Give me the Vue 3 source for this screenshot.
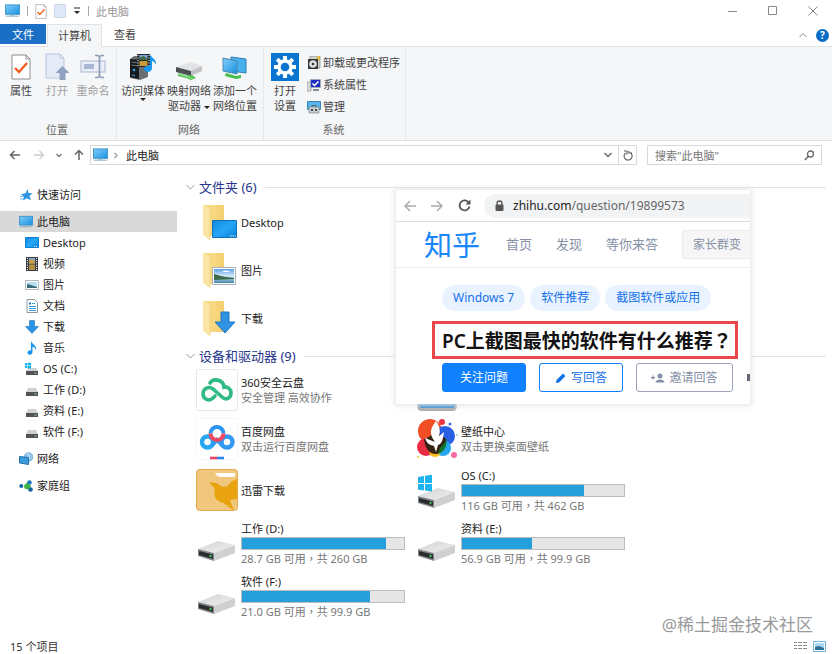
<script setup>
import { ref } from 'vue';

const search = ref('');
const selected = ref('pc');

const placeActions = [
    { icon: 'props',  label: '属性' },
    { icon: 'open',   label: '打开', disabled: true },
    { icon: 'rename', label: '重命名', disabled: true },
];

const systemActions = [
    { icon: 'uninstall', label: '卸载或更改程序' },
    { icon: 'sysprops',  label: '系统属性' },
    { icon: 'manage',    label: '管理' },
];

const children = [
    { id: 'desktop',   icon: 'desktop',   label: 'Desktop' },
    { id: 'video',     icon: 'video',     label: '视频' },
    { id: 'pictures',  icon: 'picture',   label: '图片' },
    { id: 'documents', icon: 'document',  label: '文档' },
    { id: 'downloads', icon: 'download',  label: '下载' },
    { id: 'music',     icon: 'music',     label: '音乐' },
    { id: 'c',         icon: 'disk-os',   label: 'OS (C:)' },
    { id: 'd',         icon: 'disk',      label: '工作 (D:)' },
    { id: 'e',         icon: 'disk',      label: '资料 (E:)' },
    { id: 'f',         icon: 'disk',      label: '软件 (F:)' },
];

const folders = [
    { icon: 'folder-desktop',  label: 'Desktop' },
    { icon: 'folder-picture',  label: '图片' },
    { icon: 'folder-download', label: '下载' },
];

// used — заполненная часть полосы, %
const devices = [
    { icon: 'cloud360',  label: '360安全云盘', note: '安全管理 高效协作' },
    { icon: 'device',    label: '' },
    { icon: 'baidu',     label: '百度网盘', note: '双击运行百度网盘' },
    { icon: 'wallpaper', label: '壁纸中心', note: '双击更换桌面壁纸' },
    { icon: 'xunlei',    label: '迅雷下载' },
    { icon: 'drive-os',  label: 'OS (C:)',   used: 75, note: '116 GB 可用，共 462 GB' },
    { icon: 'drive',     label: '工作 (D:)', used: 89, note: '28.7 GB 可用，共 260 GB' },
    { icon: 'drive',     label: '资料 (E:)', used: 43, note: '56.9 GB 可用，共 99.9 GB' },
    { icon: 'drive',     label: '软件 (F:)', used: 79, note: '21.0 GB 可用，共 99.9 GB' },
];

const tags = ['Windows 7', '软件推荐', '截图软件或应用'];
</script>

<template>
    <div class="explorer">
        <!-- icon sheet -->
        <svg class="sheet" width="0" height="0" aria-hidden="true">
            <defs>
                <linearGradient id="g-screen" x1="0" y1="0" x2="1" y2="1">
                    <stop offset="0" stop-color="#7fd0f8" /><stop offset="1" stop-color="#1a8fe0" />
                </linearGradient>
                <linearGradient id="g-desk" x1="0" y1="0" x2="1" y2="1">
                    <stop offset="0" stop-color="#1488dd" /><stop offset=".5" stop-color="#24a6f5" /><stop offset="1" stop-color="#0c84dc" />
                </linearGradient>
                <linearGradient id="g-folder" x1="0" y1="0" x2="1" y2="0">
                    <stop offset="0" stop-color="#fbdf93" /><stop offset="1" stop-color="#f3cf6d" />
                </linearGradient>
                <linearGradient id="g-disk" x1="0" y1="0" x2="1" y2="1">
                    <stop offset="0" stop-color="#d2d3d4" /><stop offset="1" stop-color="#f0f0f0" />
                </linearGradient>
                <linearGradient id="g-sky" x1="0" y1="0" x2="0" y2="1">
                    <stop offset="0" stop-color="#5b9fe6" /><stop offset=".5" stop-color="#d6ecfa" /><stop offset="1" stop-color="#3f86ad" />
                </linearGradient>
            </defs>
            <symbol id="i-pc" viewBox="0 0 16 14">
                <rect x=".5" y=".5" width="15" height="10" fill="url(#g-screen)" stroke="#3b93c8" />
                <path d="M6 11h4v1H6z" fill="#8fb3c6" /><path d="M1 12.5h14" stroke="#86a9bd" />
            </symbol>
            <symbol id="i-props" viewBox="0 0 20 26">
                <path d="M1 1h14l4 4v20H1z" fill="#fff" stroke="#8d8d8d" /><path d="M15 1v4h4" fill="none" stroke="#8d8d8d" />
                <path d="M4 14l4 4 8-9" fill="none" stroke="#f0601d" stroke-width="2.4" />
            </symbol>
            <symbol id="i-page" viewBox="0 0 12 14">
                <path d="M.5 .5h11v13H.5z" fill="#dfe8f6" stroke="#cdd9eb" />
            </symbol>
            <symbol id="i-open" viewBox="0 0 26 28">
                <path d="M2 1h14l4 4v20H2z" fill="#e4ebf7" stroke="#b9c6de" /><path d="M16 1v4h4" fill="none" stroke="#b9c6de" />
                <path d="M18.500 13l7 7h-4v7h-6v-7h-4z" fill="#8fa2c0" />
            </symbol>
            <symbol id="i-rename" viewBox="0 0 26 28">
                <rect x="1" y="8" width="24" height="11" fill="#e9eef8" stroke="#a9b8d3" />
                <path d="M4 11h10v5H4z" fill="#a7b6d3" />
                <path d="M15 2.500h3l1.500 1.500 1.500-1.500h3M19.500 4v19M15 24.500h3l1.500-1.500 1.500 1.500h3" fill="none" stroke="#8f9db6" stroke-width="1.700" />
            </symbol>
            <symbol id="i-media" viewBox="0 0 28 28">
                <path d="M1 6l4-3 14 1v20l-8 3-10-2z" fill="#6b6e72" /><path d="M1 6l9 1v19l-9-2z" fill="#17191c" />
                <path d="M2.500 9l6 .8M2.500 12l6 .8" stroke="#6f7880" /><circle cx="5" cy="17" r="1.300" fill="#2aa8f2" /><path d="M3 22l3 .5" stroke="#36aef5" />
                <path d="M8 1h13v13H8z" fill="#25272b" /><path d="M10.500 2h8v5h-8z" fill="#7da4df" /><path d="M10.500 8h8v5h-8z" fill="#c79b3a" />
                <path d="M10.500 5l4-2 4 3v1h-8z" fill="#426b3b" /><path d="M9 2v11M20 2v11" stroke="#fff" stroke-dasharray="1 1.500" />
                <path d="M21 1c1 4 7 5 6 11-1-3-3-4-4-4v7c0 5-8 5-8 1 0-3 3-4 6-3z" fill="#1698ee" />
            </symbol>
            <symbol id="i-netdrive" viewBox="0 0 28 28">
                <path d="M1 14l14-5 12 4-11 5z" fill="#e2e3e4" />
                <path d="M16 18l11-5v5l-11 5z" fill="#c2c3c5" />
                <path d="M1 14l15 4v5L1 19z" fill="#4b4e51" />
                <path d="M3 20l8 2v3l-8-2zM12 22h5l4 3-5 2-5-2z" fill="#4fbf54" /><path d="M3 21l8 2 7 3" stroke="#9be79d" fill="none" />
            </symbol>
            <symbol id="i-addnet" viewBox="0 0 28 28">
                <path d="M10 4l15 2v14l-15-2z" fill="#46b1ee" stroke="#2c7fb5" /><path d="M2 5l14 3v13L2 18z" fill="url(#g-screen)" stroke="#4b8aaf" />
                <path d="M5 20l10 3 5-1v3l-5 1-11-3z" fill="#48bd4c" />
            </symbol>
            <symbol id="i-gear" viewBox="0 0 28 28">
                <path d="M0 0h28v28H0z" fill="#0a74d1" />
                <circle cx="14" cy="14" r="6" fill="none" stroke="#fff" stroke-width="3.400" />
                <path d="M14 3v4M14 21v4M3 14h4M21 14h4M6.200 6.200l3 3M18.800 18.800l3 3M21.800 6.200l-3 3M9.200 18.800l-3 3" stroke="#fff" stroke-width="4" />
            </symbol>
            <symbol id="i-uninstall" viewBox="0 0 14 14">
                <path d="M3 0h10v12H3z" fill="#cfd0c8" stroke="#777" stroke-width=".6" /><path d="M9 1l4-1v5z" fill="#e4b83a" />
                <path d="M1 3h10v10H1z" fill="#35383a" /><circle cx="6" cy="8" r="3.800" fill="#dedede" /><circle cx="6" cy="8" r="1.300" fill="#35383a" />
            </symbol>
            <symbol id="i-sysprops" viewBox="0 0 14 14">
                <path d="M0 4h4v9H0z" fill="#d7d9dc" stroke="#888" stroke-width=".6" /><path d="M3.500 1.500h10v8h-10z" fill="#1d2fbd" stroke="#a5aaba" />
                <path d="M5.500 5.500l2 2 4-4" stroke="#fff" stroke-width="1.500" fill="none" /><path d="M6 12h6" stroke="#8a8d92" stroke-width="2" />
            </symbol>
            <symbol id="i-manage" viewBox="0 0 14 14">
                <path d="M.5 1.500h13v8H.5z" fill="#56b5ec" stroke="#3b83b3" /><path d="M2 7h10v6H2z" fill="#c9ced2" stroke="#7f868c" stroke-width=".7" />
                <path d="M4 9h2v2H4zM8 9h2v2H8z" fill="#41484f" /><path d="M5 7V5.500h4V7" fill="none" stroke="#59636b" />
            </symbol>
            <symbol id="i-star" viewBox="0 0 14 14">
                <path d="M8.500 1l1 4 4 .2-3 2.800 1.500 4.500-4-2.200-4 2.200.8-4L2 6.200l4.500-1z" fill="#2d94e0" /><path d="M1 11h3M1 8.500h3" stroke="#77bdf0" />
            </symbol>
            <symbol id="i-desktop" viewBox="0 0 14 12">
                <path d="M.5 .5h13v10H.5z" fill="url(#g-desk)" stroke="#0d7fd0" /><path d="M9 9.500h4" stroke="#cfeaff" stroke-dasharray="1 1" />
            </symbol>
            <symbol id="i-video" viewBox="0 0 14 14">
                <path d="M1 0h12v14H1z" fill="#3a3d44" /><path d="M4 1h6v5.500H4z" fill="#8ba7d3" /><path d="M4 7.500h6V13H4z" fill="#b58f45" />
                <path d="M4 4l3-2 3 3v1.500H4z" fill="#c9a13e" /><path d="M2.500 1v12M11.500 1v12" stroke="#fff" stroke-dasharray="1 1.200" />
            </symbol>
            <symbol id="i-picture" viewBox="0 0 14 12">
                <path d="M.5 1.500h13v9H.5z" fill="#fff" stroke="#b1b6ba" /><path d="M2 3h10v6H2z" fill="#b9def3" /><path d="M2 5l4 1 6 2v1H2z" fill="#376a7b" />
            </symbol>
            <symbol id="i-document" viewBox="0 0 14 14">
                <path d="M2 .5h7.500l3 3v10H2z" fill="#fff" stroke="#8e9aa3" /><path d="M4 4.500h2" stroke="#1c70b8" stroke-width="2" />
                <path d="M7 4.500h3M4 7.500h7M4 9.500h7M4 11.500h7" stroke="#349bd8" />
            </symbol>
            <symbol id="i-download" viewBox="0 0 14 14">
                <path d="M4.500 .5h5v6h4L7 13.500.5 6.500h4z" fill="#2c90e3" stroke="#1c77c6" stroke-width=".6" />
            </symbol>
            <symbol id="i-music" viewBox="0 0 14 14">
                <path d="M6 0c1 3.500 6 4 5 9.500C10.500 7 9 6 7.500 5.500v5.500c0 3.500-5 3.500-5 .8C2.500 10 4.500 9 6 9.500z" fill="#1692ee" />
            </symbol>
            <symbol id="i-disk" viewBox="0 0 14 14">
                <path d="M3 5h8l2 4H1z" fill="#d0d1d2" /><path d="M1 9h12v4H1z" fill="#505254" /><path d="M9.500 11h2" stroke="#9de0a5" />
            </symbol>
            <symbol id="i-disk-os" viewBox="0 0 14 14">
                <path d="M3 6h8l2 3H1z" fill="#d0d1d2" /><path d="M1 9h12v4H1z" fill="#505254" /><path d="M9.500 11h2" stroke="#9de0a5" />
                <path d="M0 1h2.500v2.500H0zM3 .7h3v2.800H3zM0 4h2.500v2H0zM3 4h3v2.500H3z" fill="#12b5ea" />
            </symbol>
            <symbol id="i-network" viewBox="0 0 14 14">
                <circle cx="9.500" cy="5" r="4.300" fill="#8cc6ea" stroke="#4c96c4" stroke-width=".6" /><path d="M8 1.500c3 1 3 5 1 7" stroke="#d8f1ff" fill="none" />
                <path d="M.5 4.500l9 1v7l-9-1.500z" fill="#3c9cdc" stroke="#2675aa" />
            </symbol>
            <symbol id="i-homegroup" viewBox="0 0 14 14">
                <path d="M8 3l4 4-2 4-5-3z" fill="#4cba4c" /><circle cx="2.300" cy="7" r="2" fill="#1764a8" /><circle cx="10.500" cy="3.500" r="2.300" fill="#1e77b7" />
                <circle cx="11.500" cy="10.500" r="2.300" fill="#16619b" /><circle cx="8" cy="7.500" r="2.800" fill="#3fb244" />
            </symbol>

            <symbol id="i-folder" viewBox="0 0 42 42">
                <path d="M7 4h21v31H13z" fill="url(#g-folder)" /><path d="M7 4l7 4v31l-7-5z" fill="#fce5a4" /><path d="M14 8v31" stroke="#efcf7b" stroke-width=".7" />
            </symbol>
            <symbol id="i-folder-desktop" viewBox="0 0 42 42">
                <use href="#i-folder" width="42" height="42" />
                <path d="M16.500 19.500h24v17h-24z" fill="url(#g-desk)" stroke="#0f6fb8" /><path d="M34 35h6" stroke="#d6f0ff" stroke-dasharray="1.500 1" />
            </symbol>
            <symbol id="i-folder-picture" viewBox="0 0 42 42">
                <use href="#i-folder" width="42" height="42" />
                <path d="M16.500 18.500h23v17h-23z" fill="#fff" stroke="#a9b1b6" /><path d="M18 20h20v14H18z" fill="url(#g-sky)" />
                <path d="M18 25l7 2 5 1 8 1v1l-20 1z" fill="#3d6b45" /><path d="M26 23c2-2 6-2 8 0z" fill="#fff" />
            </symbol>
            <symbol id="i-folder-download" viewBox="0 0 42 42">
                <use href="#i-folder" width="42" height="42" />
                <path d="M25 15h8v10h6L29 36 19 25h6z" fill="#2f92e2" stroke="#2278c2" />
            </symbol>
            <symbol id="i-cloud360" viewBox="0 0 42 42">
                <rect x=".5" y=".5" width="41" height="41" rx="2" fill="#fff" stroke="#e7e7e7" />
                <path d="M17 29c-4 4-10 1-10-4 0-6 6-8 10-5l9 8c4 4 9 1 9-4 0-4-3-6-7-6M14 14c3-5 13-4 14 4 3-1 7 2 7 6M17 29l2-2" fill="none" stroke="#2fba86" stroke-width="3.600" stroke-linecap="round" />
            </symbol>
            <symbol id="i-baidu" viewBox="0 0 42 42">
                <rect x=".5" y=".5" width="41" height="41" rx="2" fill="#fff" stroke="#f6f6f6" />
                <circle cx="11.500" cy="24" r="5.500" fill="none" stroke="#28a7f2" stroke-width="4.500" /><circle cx="31" cy="24" r="5.500" fill="none" stroke="#3298f4" stroke-width="4.500" />
                <path d="M15.500 28l5.500-6 6 6" fill="none" stroke="#2f9bf3" stroke-width="4" />
                <path d="M14.500 15.500a6.500 6.500 0 0 1 13 0" fill="none" stroke="#2b94f0" stroke-width="4" /><path d="M14.500 15.500a6.500 6.500 0 0 0 13 0" fill="none" stroke="#ee4862" stroke-width="4" />
                <path d="M14 40h7" stroke="#ef4263" stroke-width="2.600" /><path d="M21 40h7" stroke="#2c86ee" stroke-width="2.600" />
            </symbol>
            <symbol id="i-xunlei" viewBox="0 0 42 42">
                <rect x=".5" y=".5" width="41" height="41" rx="3" fill="#f1c77d" stroke="#e0ab50" />
                <path d="M19 4h20v2q0 2-2 2H25q-4 0-6-4z" fill="#fff" />
                <path d="M13 13l7 1c3 1 5 4 8 4 4 0 6-4 8-6l5-2v20l-7 1 4 10c-5-2-7-5-11-7-8-2-10-8-8-14z" fill="#e8a30f" />
            </symbol>
            <symbol id="i-wallpaper" viewBox="0 0 42 42">
                <circle cx="14" cy="13" r="12" fill="#f24e25" /><circle cx="29" cy="18" r="10" fill="#285fe5" /><circle cx="10" cy="29" r="9" fill="#e82c43" />
                <circle cx="27" cy="30" r="8" fill="#27a5ee" /><circle cx="19" cy="33" r="6" fill="#f7bb18" />
                <path d="M8 21c5-1 8-5 12-8l10 8c1 8-3 14-10 15-7 0-11-6-12-15z" fill="#352313" /><path d="M24 30c4-4 6-6 6-10 2 5-1 14-8 16z" fill="#0b782b" />
                <path d="M20 3c-5 7-8 12-1 21l-10-4c2 6 5 7 9 8l2 6 2-7c4-1 5-6 6-13-2 2-4 3-5 4 2-6 0-11-3-15z" fill="#fff" />
                <circle cx="26" cy="4" r="3" fill="#ed3348" /><circle cx="38" cy="37" r="3" fill="#f56ba5" /><circle cx="34" cy="6" r="1.500" fill="#3471ef" />
                <circle cx="2" cy="39" r="1" fill="#e7ca2c" /><circle cx="41" cy="17" r=".8" fill="#54b66d" />
            </symbol>
            <symbol id="i-device" viewBox="0 0 42 42">
                <path d="M1 30h40v7q0 5-5 5H6q-5 0-5-5z" fill="#a9adb0" /><path d="M2 28h38v7q-1 4-4 4H6q-3 0-4-4z" fill="#1c7ec9" />
            </symbol>
            <symbol id="i-drive" viewBox="0 0 42 42">
                <path d="M2 27l20-8 17 4-21 8z" fill="url(#g-disk)" /><path d="M18 31l21-8v8l-21 8z" fill="#cfd0d2" />
                <path d="M2 27l16 4v8L2 34z" fill="#85878a" /><path d="M3 29l14 3.500v4.500L3 33z" fill="#292c2e" />
                <circle cx="14.500" cy="34" r="1.200" fill="#42bf5a" />
            </symbol>
            <symbol id="i-drive-os" viewBox="0 0 42 42">
                <use href="#i-drive" width="42" height="42" />
                <path d="M2 8l6-1v7H2zM9 6.800l7-1V14H9zM2 15h6v6.500L2 20.700zM9 15h7v7.500l-7-.9z" fill="#1db4f0" />
            </symbol>
        </svg>

        <header class="titlebar">
            <svg class="ic-pc"><use href="#i-pc" /></svg>
            <i class="sep"></i>
            <button class="plain" aria-label="属性"><svg width="12" height="15"><use href="#i-props" /></svg></button>
            <button class="plain" aria-label="新建文件夹"><svg width="12" height="14"><use href="#i-page" /></svg></button>
            <button class="plain" aria-label="自定义快速访问工具栏">
                <svg width="8" height="8" viewBox="0 0 8 8"><path d="M1 1h6" stroke="#222" /><path d="M1 4h6L4 7z" fill="#222" /></svg>
            </button>
            <i class="sep"></i>
            <span class="window-title">此电脑</span>
            <div class="window-buttons">
                <button class="plain" aria-label="最小化"><svg width="10" height="10"><path d="M0 5.500h9" stroke="#888" /></svg></button>
                <button class="plain" aria-label="最大化"><svg width="10" height="10"><path d="M.5 .5h8v8h-8z" fill="none" stroke="#888" /></svg></button>
                <button class="plain" aria-label="关闭"><svg width="10" height="10"><path d="M.5 .5l9 9M9.500 .5l-9 9" stroke="#888" /></svg></button>
            </div>
        </header>

        <nav class="tabs">
            <button class="tab tab--file">文件</button>
            <button class="tab tab--active">计算机</button>
            <button class="tab">查看</button>
            <div class="tabs-right">
                <button class="plain" aria-label="折叠功能区"><svg width="8" height="6"><path d="M.5 5L4 1.500 7.500 5" fill="none" stroke="#888" /></svg></button>
                <button class="help" aria-label="帮助">?</button>
            </div>
        </nav>

        <section class="ribbon">
            <div class="group">
                <div class="group-body">
                    <button v-for="a in placeActions" :key="a.icon" class="big" :disabled="a.disabled">
                        <svg :class="['ic-big', { 'ic-tall': a.icon === 'props' }]"><use :href="'#i-' + a.icon" /></svg>
                        <span>{{ a.label }}</span>
                    </button>
                </div>
                <div class="group-label">位置</div>
            </div>
            <div class="group group--net">
                <div class="group-body">
                    <button class="big">
                        <svg class="ic-big"><use href="#i-media" /></svg>
                        <span>访问媒体</span>
                        <i class="caret"></i>
                    </button>
                    <button class="big">
                        <svg class="ic-big"><use href="#i-netdrive" /></svg>
                        <span>映射网络<br>驱动器 <i class="caret"></i></span>
                    </button>
                    <button class="big">
                        <svg class="ic-big"><use href="#i-addnet" /></svg>
                        <span>添加一个<br>网络位置</span>
                    </button>
                </div>
                <div class="group-label">网络</div>
            </div>
            <div class="group">
                <div class="group-body">
                    <button class="big">
                        <svg class="ic-big"><use href="#i-gear" /></svg>
                        <span>打开<br>设置</span>
                    </button>
                    <div class="small-list">
                        <button v-for="a in systemActions" :key="a.icon" class="small">
                            <svg class="ic-14"><use :href="'#i-' + a.icon" /></svg>{{ a.label }}
                        </button>
                    </div>
                </div>
                <div class="group-label">系统</div>
            </div>
        </section>

        <div class="address-row">
            <div class="history">
                <button class="plain" aria-label="后退"><svg width="12" height="10"><path d="M11 5H1.500M5.500 1l-4 4 4 4" fill="none" stroke="#666" stroke-width="1.500" /></svg></button>
                <button class="plain" aria-label="前进"><svg width="12" height="10"><path d="M1 5h9.500M6.500 1l4 4-4 4" fill="none" stroke="#ccc" stroke-width="1.300" /></svg></button>
                <button class="plain" aria-label="最近位置"><svg width="6" height="5"><path d="M.5 1L3 3.500 5.500 1" fill="none" stroke="#777" stroke-width="1.300" /></svg></button>
                <button class="plain" aria-label="上移"><svg width="10" height="12"><path d="M5 11V1.500M1 5.500l4-4 4 4" fill="none" stroke="#666" stroke-width="1.500" /></svg></button>
            </div>
            <div class="address">
                <svg class="ic-pc"><use href="#i-pc" /></svg>
                <svg width="4" height="7"><path d="M.5 .8L3 3.500.5 6.200" fill="none" stroke="#555" /></svg>
                <span class="crumb">此电脑</span>
                <button class="plain" aria-label="展开"><svg width="8" height="6"><path d="M.5 1L4 4.500 7.500 1" fill="none" stroke="#666" stroke-width="1.500" /></svg></button>
                <button class="plain refresh" aria-label="刷新">
                    <svg width="10" height="11" viewBox="0 0 10 11"><path d="M7 2.500A4 4 0 1 1 2.500 3M1 1h3v3.500M6 1v2h3" fill="none" stroke="#666" stroke-width="1.200" /></svg>
                </button>
            </div>
            <label class="search">
                <input v-model="search" type="search" placeholder='搜索"此电脑"' aria-label="搜索此电脑" />
                <svg width="11" height="11"><circle cx="6.500" cy="4" r="3" fill="none" stroke="#666" stroke-width="1.300" /><path d="M4.500 6.200L.8 10" stroke="#666" stroke-width="1.500" /></svg>
            </label>
        </div>

        <div class="body">
            <aside class="sidebar">
                <button class="node"><svg class="ic-14"><use href="#i-star" /></svg>快速访问</button>
                <div class="branch">
                    <button class="node" :class="{ 'node--selected': selected === 'pc' }" @click="selected = 'pc'">
                        <svg class="ic-14"><use href="#i-pc" /></svg>此电脑
                    </button>
                    <button
                        v-for="c in children" :key="c.id"
                        class="node node--child" :class="{ 'node--selected': selected === c.id }"
                        @click="selected = c.id"
                    >
                        <svg class="ic-14"><use :href="'#i-' + c.icon" /></svg>{{ c.label }}
                    </button>
                </div>
                <button class="node"><svg class="ic-14"><use href="#i-network" /></svg>网络</button>
                <button class="node"><svg class="ic-14"><use href="#i-homegroup" /></svg>家庭组</button>
            </aside>

            <main class="content">
                <h2 class="heading">
                    <svg width="9" height="6"><path d="M.5 1l4 4 4-4" fill="none" stroke="#999" /></svg>文件夹 (6)
                </h2>
                <div class="folders">
                    <div v-for="f in folders" :key="f.icon" class="tile">
                        <svg class="ic-tile"><use :href="'#i-' + f.icon" /></svg>
                        <span>{{ f.label }}</span>
                    </div>
                </div>

                <h2 class="heading">
                    <svg width="9" height="6"><path d="M.5 1l4 4 4-4" fill="none" stroke="#999" /></svg>设备和驱动器 (9)
                </h2>
                <div class="devices">
                    <div v-for="d in devices" :key="d.icon + d.label" class="tile" :class="{ 'tile--drive': d.used }">
                        <svg class="ic-tile"><use :href="'#i-' + d.icon" /></svg>
                        <div class="tile-text">
                            <div>{{ d.label }}</div>
                            <div v-if="d.used" class="bar"><div class="bar-fill" :style="{ width: d.used + '%' }"></div></div>
                            <div v-if="d.note" class="note">{{ d.note }}</div>
                        </div>
                    </div>
                </div>

                <!-- pinned browser snippet over the file list -->
                <article class="snip">
                    <div class="browser">
                        <svg width="12" height="12"><path d="M12 6H1M6 1L1 6l5 5" fill="none" stroke="#aaa" stroke-width="1.500" /></svg>
                        <svg width="12" height="12"><path d="M0 6h11M6 1l5 5-5 5" fill="none" stroke="#aaa" stroke-width="1.500" /></svg>
                        <svg width="13" height="13"><path d="M11 4A5 5 0 1 0 11.500 7.500" fill="none" stroke="#555" stroke-width="1.800" /><path d="M12.500 .5v5h-5z" fill="#555" /></svg>
                        <div class="url">
                            <svg width="9" height="12"><path d="M2 5V3.500a2.500 2.500 0 0 1 5 0V5" fill="none" stroke="#555" stroke-width="1.300" /><rect x=".5" y="4.500" width="8" height="6.500" rx="1" fill="#555" /></svg>
                            <span><b>zhihu.com</b>/question/19899573</span>
                        </div>
                    </div>
                    <div class="site">
                        <span class="logo">知乎</span>
                        <a href="#">首页</a>
                        <a href="#">发现</a>
                        <a href="#">等你来答</a>
                        <span class="query">家长群变</span>
                    </div>
                    <div class="question">
                        <div class="tags">
                            <a v-for="t in tags" :key="t" href="#" class="tag">{{ t }}</a>
                        </div>
                        <h1 class="title">PC上截图最快的软件有什么推荐<span class="mark">？</span></h1>
                        <div class="actions">
                            <button class="btn btn--primary">关注问题</button>
                            <button class="btn btn--outline">
                                <svg width="12" height="12"><path d="M1 11l.5-3L8 1.500 10.500 4 4 10.500z" fill="#0f73e6" /></svg>写回答
                            </button>
                            <button class="btn btn--grey">
                                <svg width="14" height="12"><circle cx="9" cy="4" r="2.500" fill="#8590a6" /><path d="M4.500 10.500c0-4 9-4 9 0zM0 5h4v1.200H0zM1.400 3.600h1.200v4H1.400z" fill="#8590a6" /></svg>邀请回答
                            </button>
                            <i class="more"></i>
                        </div>
                    </div>
                </article>
            </main>
        </div>

        <footer class="status">
            <span>15 个项目</span>
            <div class="views">
                <button class="plain" aria-label="详细信息"><svg width="13" height="10"><path d="M0 1.500h3M4 1.500h4M9 1.500h4M0 4.500h3M4 4.500h4M9 4.500h4M0 7.500h3M4 7.500h4M9 7.500h4" stroke="#888" /></svg></button>
                <button class="plain" aria-label="大图标"><svg width="13" height="11"><path d="M.5 .5h12v10H.5z" fill="#fff" stroke="#6db3dc" /><path d="M2 2h9v7H2z" fill="#a8d8f2" /><path d="M2 6l4-1 5 2v2H2z" fill="#2e6f95" /></svg></button>
            </div>
        </footer>
        <div class="watermark">@稀土掘金技术社区</div>
    </div>
</template>

<style>
body { margin: 0; background: #fff; }
</style>

<style scoped>
.explorer {
    position: relative;
    display: flex;
    flex-direction: column;
    min-height: 100vh;
    overflow: hidden;
    font: 11px/15px "Noto Sans", "Noto Sans CJK SC", sans-serif;
    color: #222;
    background: #fff;
}
.explorer *, .explorer *::before { box-sizing: border-box; }
.sheet { position: absolute; }
svg { flex-shrink: 0; display: block; }
button { font: inherit; color: inherit; margin: 0; padding: 0; border: 0; background: none; cursor: pointer; white-space: nowrap; }
.plain { display: flex; align-items: center; justify-content: center; }
.ic-14   { width: 14px; height: 14px; }
.ic-pc   { width: 15px; height: 14px; }
.ic-big  { width: 28px; height: 28px; }
.ic-tall { height: 26px; margin: 1px 0; }
.ic-tile { width: 42px; height: 42px; }

/* title bar */
.titlebar { display: flex; align-items: center; gap: 7px; height: 22px; padding: 0 14px 0 5px; }
.sep { width: 1px; height: 10px; background: #aaa; }
.window-title { color: #999; }
.window-buttons { display: flex; gap: 30px; margin-left: auto; }

/* tabs */
.tabs { display: flex; align-items: flex-start; height: 24px; padding-top: 2px; position: relative; }
.tab { height: 20px; padding: 0 12px; color: #444; }
.tab--file { width: 46px; background: #1a6fc4; color: #fff; }
.tab--active { height: 23px; padding: 0 10px 2px; margin-left: 1px; border: 1px solid #e0e3e6; border-bottom: 0; background: #f5f6f7; }
.tabs-right { display: flex; align-items: center; gap: 9px; height: 22px; margin-left: auto; padding-right: 3px; }
.help { width: 13px; height: 13px; border-radius: 50%; background: #0b6cc4; color: #fff; font-size: 10px; line-height: 13px; font-weight: 700; }

/* ribbon */
.ribbon { display: flex; height: 95px; background: #f5f6f7; border-top: 1px solid #dfe3e7; border-bottom: 1px solid #dbe0e5; }
.group { display: flex; flex-direction: column; justify-content: space-between; padding: 6px 5px 3px 3px; border-right: 1px solid #e6e8ea; }
.group-body { display: flex; }
.group-label { text-align: center; color: #666; }
.big { display: flex; flex-direction: column; align-items: center; width: 36px; color: #444; line-height: 15px; gap: 2px; }
.big:disabled { color: #a0a0a0; }
.group--net .big { width: 46px; }
.big > .caret { margin-top: -2px; }
.caret { display: inline-block; border: 3px solid transparent; border-top-color: #222; border-bottom: 0; vertical-align: middle; }
.small-list { display: flex; flex-direction: column; gap: 7px; padding: 2px 0 0 4px; }
.small { display: flex; align-items: center; gap: 2px; height: 15px; color: #444; }

/* address row */
.address-row { display: flex; align-items: center; gap: 10px; padding: 4px 10px 4px 9px; }
.history { display: flex; align-items: center; justify-content: space-between; width: 75px; margin-right: -4px; }
.address { flex: 1; display: flex; align-items: center; gap: 6px; height: 20px; padding-left: 2px; border: 1px solid #d9d9d9; }
.crumb { flex: 1; padding-left: 2px; }
.refresh { width: 18px; height: 18px; border-left: 1px solid #d9d9d9; }
.search { display: flex; align-items: center; width: 175px; height: 20px; padding: 0 6px 0 7px; border: 1px solid #d9d9d9; }
.search input { flex: 1; min-width: 0; padding: 0; border: 0; outline: 0; font: inherit; color: #222; background: none; }
.search input::placeholder { color: #777; opacity: 1; }

/* body */
.body { display: flex; flex: 1; }
.sidebar { display: flex; flex-direction: column; gap: 6px; flex: 0 0 177px; padding-top: 15px; }
.branch { display: flex; flex-direction: column; }
.node { display: flex; align-items: center; gap: 4px; width: 100%; height: 21px; padding-left: 19px; text-align: left; }
.node--child { padding-left: 25px; }
.node--selected { background: #d9d9d9; }

.content { position: relative; flex: 1; min-width: 0; padding: 9px 6px 0 9px; }
.heading { display: flex; align-items: center; gap: 4px; margin: 0; height: 18px; font-size: 13px; font-weight: 400; color: #26358a; }
.heading::after { content: ""; flex: 1; height: 1px; margin-left: 4px; background: #e2e2e2; }
.folders { display: grid; gap: 6px; padding: 5px 0 8px 10px; }
.devices { display: grid; grid-template-columns: 210px 210px; gap: 1px 10px; padding: 1px 0 0 10px; }
.tile { display: flex; align-items: center; gap: 3px; min-height: 42px; }
.devices .tile { min-height: 48px; }
.devices .tile--drive { min-height: 52px; }
.tile-text { width: 164px; white-space: nowrap; }
.note { color: #777; }
/* the TC face centres the full-width comma and question mark */
.tile--drive .note { font-family: "Noto Sans", "Noto Sans CJK TC", sans-serif; }
.bar { height: 13px; margin: 1px 0; border: 1px solid #bcbcbc; background: #e6e6e6; }
.bar-fill { height: 100%; background: #26a0da; }

/* browser snippet */
.snip { position: absolute; top: 21px; left: 219px; width: 354px; padding-bottom: 12px; overflow: hidden; background: #fff; box-shadow: 0 0 5px 2px #e8e8e8; }
.browser { display: flex; align-items: center; gap: 15px; height: 32px; padding-left: 8px; border-bottom: 1px solid #ddd; }
.url { flex: 1; display: flex; align-items: center; gap: 9px; height: 24px; margin-left: -2px; padding-left: 11px; border-radius: 12px 0 0 12px; background: #f1f3f4; font-size: 12px; color: #666; }
.url b { font-weight: 400; color: #222; }
.site { display: flex; align-items: center; height: 46px; padding-left: 28px; gap: 24px; border-bottom: 1px solid #eee; white-space: nowrap; }
.site a { font-size: 13px; color: #8590a6; text-decoration: none; }
.logo { padding-right: 2px; font-size: 28px; line-height: 40px; color: #1787fb; }
.query { flex: 1; height: 29px; padding-left: 10px; border: 1px solid #ebebeb; border-right: 0; border-radius: 3px 0 0 3px; background: #f6f6f6; font-size: 12px; line-height: 27px; color: #8590a6; }
.question { padding: 17px 0 0 36px; }
.tags { display: flex; gap: 5px; padding-left: 10px; }
.tag { height: 26px; padding: 0 11px; border-radius: 13px; background: #e9f3ff; font-size: 12px; line-height: 26px; color: #1470e8; text-decoration: none; }
.title { width: 306px; height: 38px; margin: 10px 0 4px; padding-left: 7px; border: 3px solid #e8484a; font-size: 19px; line-height: 32px; font-weight: 600; color: #121212; white-space: nowrap; }
.mark { font-family: "Noto Sans CJK TC", sans-serif; text-spacing-trim: space-all; }
.actions { display: flex; align-items: center; gap: 13px; padding-left: 10px; }
.btn { display: flex; align-items: center; justify-content: center; gap: 4px; width: 84px; height: 29px; border: 1px solid #1080ff; border-radius: 3px; font-size: 12px; }
.btn--primary { background: #1080ff; color: #fff; }
.btn--outline { color: #1470e8; }
.btn--grey { width: 97px; border-color: #9aa3b5; color: #8590a6; }
.more { width: 3px; height: 7px; margin-left: auto; background: #667; }

/* status bar */
.status { display: flex; align-items: center; justify-content: space-between; height: 16px; padding: 0 6px 0 10px; color: #333; }
.views { display: flex; gap: 6px; }
.watermark { position: absolute; right: 19px; bottom: 17px; font-size: 17px; line-height: 24px; color: #999; }
</style>
